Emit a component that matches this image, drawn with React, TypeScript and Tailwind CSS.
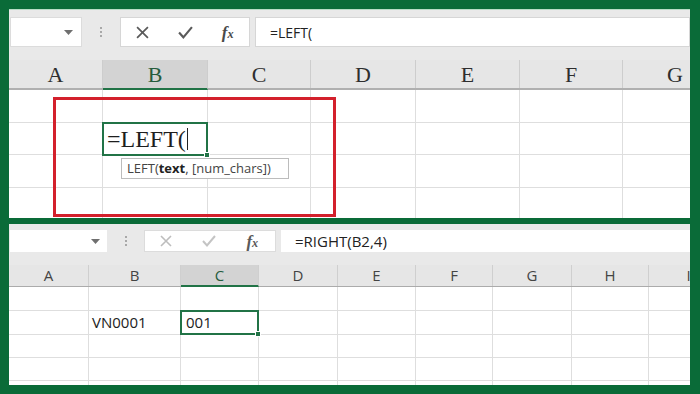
import React from "react";

const GREEN = "#217346";

function Dots() {
  return (
    <div className="flex flex-col items-center gap-[2px]">
      <div className="w-[2px] h-[2px] bg-[#a8a8a8]" />
      <div className="w-[2px] h-[2px] bg-[#a8a8a8]" />
      <div className="w-[2px] h-[2px] bg-[#a8a8a8]" />
    </div>
  );
}

function Arrow() {
  return (
    <svg width="9" height="5" viewBox="0 0 9 5">
      <path d="M0 0 L9 0 L4.5 5 Z" fill="#6f6f6f" />
    </svg>
  );
}

function XIcon({ color, size }: { color: string; size: number }) {
  return (
    <svg width={size} height={size} viewBox="0 0 12 12">
      <path d="M1 1 L11 11 M11 1 L1 11" stroke={color} strokeWidth="1.6" fill="none" />
    </svg>
  );
}

function CheckIcon({ color, size }: { color: string; size: number }) {
  return (
    <svg width={size} height={size} viewBox="0 0 14 12">
      <path d="M1 6 L5 10.5 L13 1" stroke={color} strokeWidth="2" fill="none" />
    </svg>
  );
}

function Fx({ color, size }: { color: string; size: number }) {
  return (
    <span
      className="italic font-bold leading-none"
      style={{ color, fontSize: size, fontFamily: '"Liberation Serif", serif' }}
    >
      f<span style={{ fontSize: size * 0.72 }}>x</span>
    </span>
  );
}

const topCols = [
  { l: "A", w: 94 },
  { l: "B", w: 105 },
  { l: "C", w: 103 },
  { l: "D", w: 105 },
  { l: "E", w: 104 },
  { l: "F", w: 103 },
  { l: "G", w: 105 },
];
const topRows = [33, 32, 33, 40];

const botCols = [
  { l: "A", w: 80 },
  { l: "B", w: 92 },
  { l: "C", w: 78 },
  { l: "D", w: 79 },
  { l: "E", w: 78 },
  { l: "F", w: 77 },
  { l: "G", w: 79 },
  { l: "H", w: 77 },
  { l: "I", w: 80 },
];
const botRows = [24, 24, 23, 23, 20];

function TopPanel() {
  return (
    <div className="relative h-[209px] flex flex-col overflow-hidden bg-[#e9e9e9] shrink-0">
      <div className="h-[8px] shrink-0 border-t border-[#b8dcc6]" />
      <div className="h-[30px] shrink-0 flex">
        <div className="ml-[1px] w-[72px] bg-white flex items-center justify-end pr-[8px] border border-[#dcdcdc]">
          <Arrow />
        </div>
        <div className="w-[38px] flex items-center justify-center">
          <Dots />
        </div>
        <div className="w-[130px] bg-white border border-[#d6d6d6] flex items-center">
          <div className="w-[43px] flex justify-center">
            <XIcon color="#5a5a5a" size={13} />
          </div>
          <div className="w-[43px] flex justify-center">
            <CheckIcon color="#5a5a5a" size={15} />
          </div>
          <div className="w-[43px] flex justify-center">
            <Fx color="#4a4a4a" size={17} />
          </div>
        </div>
        <div
          className="ml-[5px] flex-1 bg-white border border-[#d6d6d6] flex items-center pl-[14px] text-[14px] text-[#222]"
          style={{ fontFamily: '"Open Sans", sans-serif' }}
        >
          =LEFT(
        </div>
      </div>
      <div className="h-[13px] shrink-0" />
      <div
        className="h-[30px] shrink-0 flex border-b-2 border-[#b0b0b0] bg-[#e6e6e6]"
        style={{ fontFamily: '"Liberation Serif", serif' }}
      >
        {topCols.map((c) => (
          <div
            key={c.l}
            style={{ width: c.w }}
            className={
              "shrink-0 flex items-center justify-center text-[22px] border-r border-[#cdcdcd] " +
              (c.l === "B"
                ? "bg-[#d3d3d3] text-[#265c3c] border-b-2 border-b-[#217346] -mb-[2px]"
                : "text-[#2e2e2e]")
            }
          >
            {c.l}
          </div>
        ))}
      </div>
      <div className="flex-1 bg-white flex flex-col">
        {topRows.map((h, ri) => (
          <div key={ri} className="flex shrink-0" style={{ height: h }}>
            {topCols.map((c, ci) => (
              <div
                key={c.l}
                style={{ width: c.w }}
                className="relative shrink-0 border-r border-b border-[#dedede]"
              >
                {ri === 1 && ci === 1 && (
                  <>
                    <div
                      className="absolute -left-[1px] -top-[1px] -right-[1px] -bottom-[2px] border-2 flex items-center pl-[3px] z-10"
                      style={{ borderColor: GREEN }}
                    >
                      <span
                        className="text-[24px] text-[#1e1e1e] leading-none"
                        style={{ fontFamily: '"Liberation Serif", serif' }}
                      >
                        =LEFT(
                      </span>
                      <span className="ml-[1px] w-[1px] h-[22px] bg-[#222]" />
                      <div
                        className="absolute -right-[4px] -bottom-[4px] w-[6px] h-[6px] border border-white"
                        style={{ backgroundColor: GREEN }}
                      />
                    </div>
                    <div
                      className="absolute left-[18px] top-[35px] w-[168px] h-[21px] bg-white border border-[#bcbcbc] flex items-center pl-[5px] text-[13px] text-[#444] whitespace-nowrap z-20"
                      style={{ fontFamily: '"Open Sans", sans-serif' }}
                    >
                      LEFT(<b className="font-bold text-[#222]">text</b>, [num_chars])
                    </div>
                  </>
                )}
              </div>
            ))}
          </div>
        ))}
      </div>
      <div className="absolute left-[44px] top-[88px] w-[283px] h-[120px] border-[3px] border-[#d3202c] pointer-events-none z-30" />
    </div>
  );
}

function BottomPanel() {
  return (
    <div
      className="relative flex-1 flex flex-col overflow-hidden bg-[#e9e9e9]"
      style={{ fontFamily: '"Open Sans", sans-serif' }}
    >
      <div className="h-[6px] shrink-0" />
      <div className="h-[22px] shrink-0 flex">
        <div className="ml-[1px] w-[97px] bg-white flex items-center justify-end pr-[7px]">
          <Arrow />
        </div>
        <div className="w-[37px] flex items-center justify-center">
          <Dots />
        </div>
        <div className="w-[132px] bg-white border border-[#dcdcdc] flex items-center">
          <div className="w-[43px] flex justify-center">
            <XIcon color="#bdbdbd" size={12} />
          </div>
          <div className="w-[43px] flex justify-center">
            <CheckIcon color="#c4c4c4" size={14} />
          </div>
          <div className="w-[46px] flex justify-center">
            <Fx color="#5a5a5a" size={17} />
          </div>
        </div>
        <div className="ml-[5px] flex-1 bg-white flex items-center pl-[14px] text-[15px] text-[#222]">
          =RIGHT(B2,4)
        </div>
      </div>
      <div className="h-[13px] shrink-0" />
      <div className="h-[22px] shrink-0 flex border-b border-[#ababab] bg-[#e6e6e6]">
        {botCols.map((c) => (
          <div
            key={c.l}
            style={{ width: c.w }}
            className={
              "shrink-0 flex items-center justify-center text-[15px] border-r border-[#cfcfcf] " +
              (c.l === "C"
                ? "bg-[#d3d3d3] text-[#265c3c] border-b-2 border-b-[#217346] -mb-[1px]"
                : "text-[#444]")
            }
          >
            {c.l}
          </div>
        ))}
      </div>
      <div className="flex-1 bg-white flex flex-col">
        {botRows.map((h, ri) => (
          <div key={ri} className="flex shrink-0" style={{ height: h }}>
            {botCols.map((c, ci) => (
              <div
                key={c.l}
                style={{ width: c.w }}
                className="relative shrink-0 border-r border-b border-[#dedede] flex items-center text-[15px] text-[#222]"
              >
                {ri === 1 && ci === 1 && <span className="pl-[3px]">VN0001</span>}
                {ri === 1 && ci === 2 && (
                  <div
                    className="absolute -left-[1px] -top-[1px] -right-[1px] -bottom-[1px] border-2 flex items-center pl-[4px] z-10"
                    style={{ borderColor: GREEN }}
                  >
                    001
                    <div
                      className="absolute -right-[4px] -bottom-[4px] w-[6px] h-[6px] border border-white"
                      style={{ backgroundColor: GREEN }}
                    />
                  </div>
                )}
              </div>
            ))}
          </div>
        ))}
      </div>
    </div>
  );
}

export default function App() {
  return (
    <div className="w-[700px] h-[394px] bg-[#0a6b38] pt-[9px] pl-[9px] pr-[10px] pb-[9px] flex flex-col gap-[6px] overflow-hidden">
      <TopPanel />
      <BottomPanel />
    </div>
  );
}
